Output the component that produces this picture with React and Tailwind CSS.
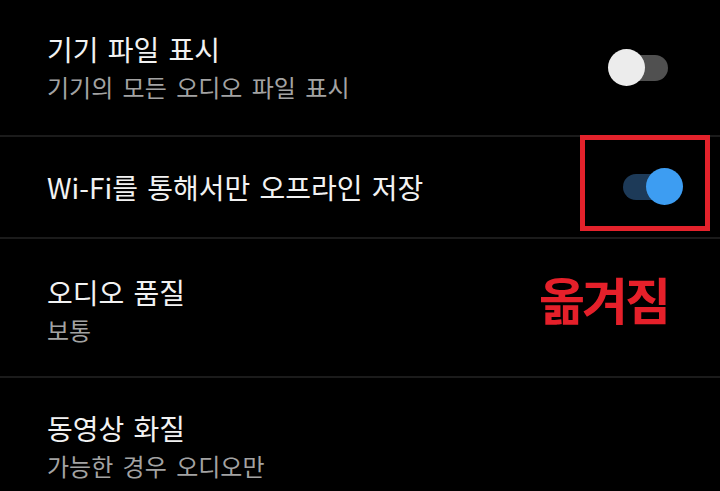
const font = { fontFamily: '"Noto Sans CJK KR", "Noto Sans", sans-serif' };

function Toggle({ on }) {
  return (
    <div className="relative w-[77px] h-[38px] shrink-0">
      <div
        className={
          on
            ? "absolute left-[17px] top-[6px] w-[45px] h-[26px] rounded-full bg-[#1d3a58]"
            : "absolute left-[17px] top-[6px] w-[45px] h-[26px] rounded-full bg-[#505050]"
        }
      />
      <div
        className={
          on
            ? "absolute left-[40px] top-0 w-[37px] h-[37px] rounded-full bg-[#3d9df2]"
            : "absolute left-[2px] top-0 w-[37px] h-[37px] rounded-full bg-[#ececec]"
        }
      />
    </div>
  );
}

function Title({ children }) {
  return (
    <div className="text-[28px] leading-[37px] [word-spacing:3px] text-[#f2f2f2]">
      {children}
    </div>
  );
}

function Sub({ children }) {
  return (
    <div className="text-[24px] leading-[37px] [word-spacing:4px] text-[#a3a3a3]">
      {children}
    </div>
  );
}

function Divider() {
  return <div className="h-[2px] bg-[#1b1b1b]" />;
}

export default function App() {
  return (
    <div className="relative w-[720px] h-[491px] overflow-hidden bg-black" style={font}>
      {/* 기기 파일 */}
      <div className="h-[135px] flex items-center justify-between pl-[47px] pr-[37px]">
        <div>
          <Title>기기 파일 표시</Title>
          <Sub>기기의 모든 오디오 파일 표시</Sub>
        </div>
        <Toggle on={false} />
      </div>
      <Divider />

      {/* wifi */}
      <div className="h-[100px] flex items-center justify-between pl-[47px] pr-[37px]">
        <Title>Wi-Fi를 통해서만 오프라인 저장</Title>
        <Toggle on />
      </div>
      <Divider />

      {/* 오디오 품질 */}
      <div className="h-[137px] flex items-center justify-between pl-[47px] pr-[52px] pt-[6px]">
        <div>
          <Title>오디오 품질</Title>
          <Sub>보통</Sub>
        </div>
        <div className="text-[50px] font-bold tracking-[-3px] leading-none text-[#e5202a] -mt-[26px]">
          옮겨짐
        </div>
      </div>
      <Divider />

      {/* 동영상 화질 */}
      <div className="h-[137px] flex items-center pl-[47px]">
        <div>
          <Title>동영상 화질</Title>
          <Sub>가능한 경우 오디오만</Sub>
        </div>
      </div>

      {/* annotation box */}
      <div className="absolute left-[580px] top-[135px] w-[130px] h-[96px] border-[5px] border-[#e3222b]" />
    </div>
  );
}
